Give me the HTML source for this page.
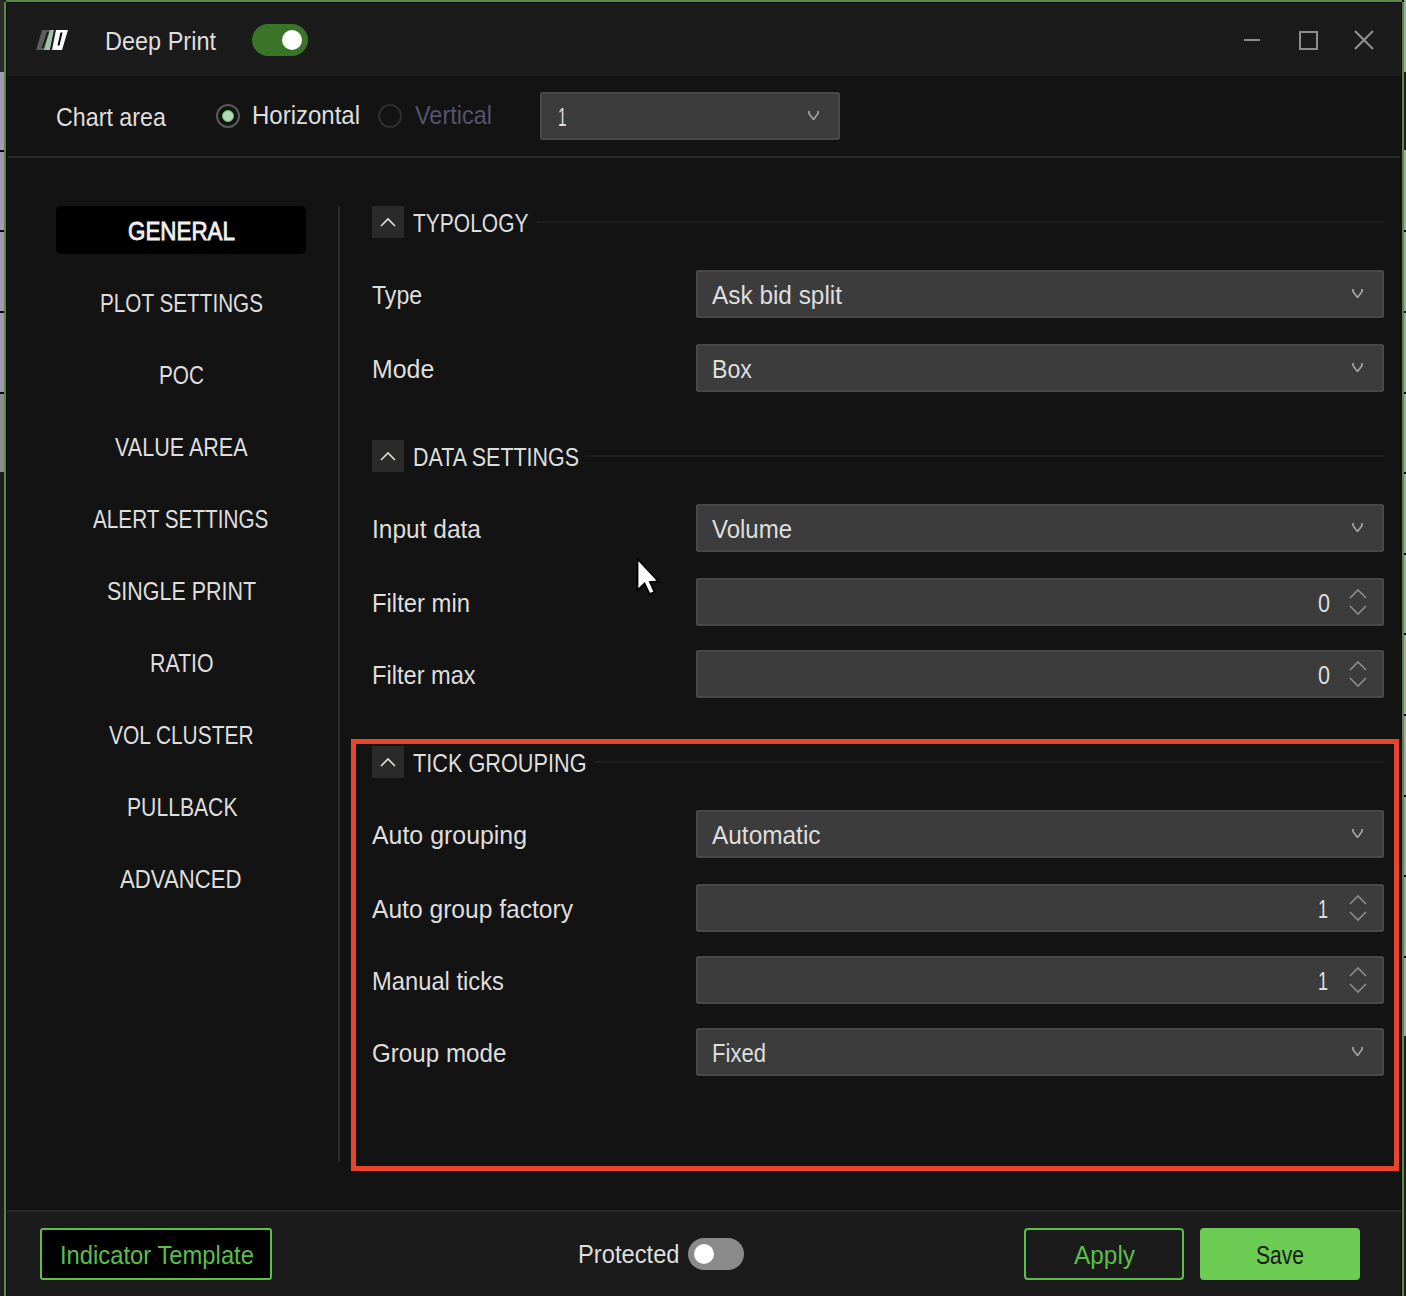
<!DOCTYPE html>
<html><head><meta charset="utf-8"><style>
html,body{margin:0;padding:0;width:1406px;height:1296px;overflow:hidden;background:#121212}
body{position:relative;font-family:"Liberation Sans",sans-serif}
.abs{position:absolute}
.t{position:absolute;font-size:25px;line-height:25px;white-space:nowrap;transform-origin:0 0}
.ic{position:absolute;overflow:visible}
.dd{position:absolute;box-sizing:border-box;background:#3c3c3c;border:2px solid #484848;border-radius:2px}
.hb{position:absolute;width:32px;height:32px;background:#2a2a2a}
.hl{position:absolute;height:2px;background:#1f1f1f}
</style></head><body>
<div class="abs" style="left:0;top:0;width:4px;height:72px;background:#2a2a2a"></div>
<div class="abs" style="left:0;top:72px;width:4px;height:320px;background:#a39ab3"></div>
<div class="abs" style="left:0;top:392px;width:4px;height:80px;background:#8e8e8e"></div>
<div class="abs" style="left:0;top:472px;width:4px;height:824px;background:#1e1e1e"></div>
<div class="abs" style="left:0;top:150px;width:4px;height:2px;background:#050505"></div>
<div class="abs" style="left:0;top:230px;width:4px;height:2px;background:#050505"></div>
<div class="abs" style="left:0;top:311px;width:4px;height:2px;background:#050505"></div>
<div class="abs" style="left:0;top:392px;width:4px;height:2px;background:#050505"></div>
<div class="abs" style="left:1404px;top:0px;width:2px;height:72px;background:#9aab98"></div>
<div class="abs" style="left:1404px;top:72px;width:2px;height:78px;background:#1e1e1e"></div>
<div class="abs" style="left:1404px;top:150px;width:2px;height:483px;background:#9aab98"></div>
<div class="abs" style="left:1404px;top:633px;width:2px;height:81px;background:#a2aea0"></div>
<div class="abs" style="left:1404px;top:714px;width:2px;height:81px;background:#a6a6a6"></div>
<div class="abs" style="left:1404px;top:795px;width:2px;height:161px;background:#9aab98"></div>
<div class="abs" style="left:1404px;top:956px;width:2px;height:80px;background:#a6a6a6"></div>
<div class="abs" style="left:1404px;top:1036px;width:2px;height:260px;background:#1e1e1e"></div>
<div class="abs" style="left:1404px;top:230px;width:2px;height:2px;background:#050505"></div>
<div class="abs" style="left:1404px;top:311px;width:2px;height:2px;background:#050505"></div>
<div class="abs" style="left:1404px;top:392px;width:2px;height:2px;background:#050505"></div>
<div class="abs" style="left:1404px;top:472px;width:2px;height:2px;background:#050505"></div>
<div class="abs" style="left:1404px;top:553px;width:2px;height:2px;background:#050505"></div>
<div class="abs" style="left:1404px;top:633px;width:2px;height:2px;background:#050505"></div>
<div class="abs" style="left:1404px;top:714px;width:2px;height:2px;background:#050505"></div>
<div class="abs" style="left:1404px;top:795px;width:2px;height:2px;background:#050505"></div>
<div class="abs" style="left:1404px;top:875px;width:2px;height:2px;background:#050505"></div>
<div class="abs" style="left:1404px;top:956px;width:2px;height:2px;background:#050505"></div>
<!-- window -->
<div class="abs" style="left:4px;top:0;width:2px;height:2px;background:#1e1e1e"></div>
<div class="abs" style="left:6px;top:0;width:1396px;height:2px;background:#5a8a48"></div>
<div class="abs" style="left:4px;top:2px;width:2px;height:1294px;background:#5a8a48"></div>
<div class="abs" style="left:1402px;top:2px;width:2px;height:1294px;background:#5a8a48"></div>
<div class="abs" style="left:6px;top:2px;width:1396px;height:1294px;background:#0e0e10"></div>
<div class="abs" style="left:7px;top:3px;width:1394px;height:73px;background:#1b1b1b"></div>
<div class="abs" style="left:7px;top:76px;width:1394px;height:1134px;background:#131313"></div>
<div class="abs" style="left:8px;top:156px;width:1392px;height:2px;background:#2a2a2a"></div>
<div class="abs" style="left:7px;top:1210px;width:1394px;height:2px;background:#272727"></div>
<div class="abs" style="left:7px;top:1212px;width:1394px;height:84px;background:#1b1b1b"></div>
<!-- logo -->
<svg class="ic" style="left:34px;top:28px" width="38" height="26" viewBox="34 28 38 26">
<polygon points="42,30 50,30 43.8,50 36,50" fill="#5c5c5c"/>
<polygon points="47,32 48.8,32 43.6,48 41.8,48" fill="#151515"/>
<polygon points="50,30 54,30 50,50 43.8,50" fill="#a3c2a3"/>
<polygon points="54,30 56,30 52,50 50,50" fill="#222"/>
<polygon points="56,30 68,30 62,50 52,50" fill="#ffffff"/>
<polygon points="60.5,32.5 62.5,32.5 59.5,45.5 57.5,45.5" fill="#000"/>
</svg>
<!-- title toggle -->
<div class="abs" style="left:252px;top:24px;width:56px;height:32px;border-radius:16px;background:#3a7428"></div>
<div class="abs" style="left:282px;top:30px;width:20px;height:20px;border-radius:10px;background:#fff"></div>
<!-- window buttons -->
<div class="abs" style="left:1244px;top:39px;width:16px;height:2px;background:#8e8e8e"></div>
<div class="abs" style="left:1299px;top:31px;width:19px;height:19px;box-sizing:border-box;border:2.5px solid #8e8e8e"></div>
<svg class="ic" style="left:1354px;top:30px" width="20" height="20" viewBox="0 0 20 20"><path d="M1 1 L19 19 M19 1 L1 19" stroke="#8e8e8e" stroke-width="2.2"/></svg>
<!-- radios -->
<div class="abs" style="left:216px;top:104px;width:24px;height:24px;box-sizing:border-box;border-radius:12px;border:2px solid #5a5a5a"></div>
<div class="abs" style="left:222px;top:110px;width:12px;height:12px;box-sizing:border-box;border-radius:6px;background:#b5d6bd;border:1.5px solid #5ccc4a"></div>
<div class="abs" style="left:378px;top:104px;width:24px;height:24px;box-sizing:border-box;border-radius:12px;border:2px solid #2e2e2e"></div>
<!-- chart area dropdown -->
<div class="dd" style="left:540px;top:92px;width:300px;height:48px"></div><svg class="ic" style="left:807px;top:110px" width="14" height="12" viewBox="0 0 14 12"><path d="M2 1 L2 3.5 L6.5 9.5 L11 3.5 L11 1" stroke="#a0a0a0" stroke-width="1.8" fill="none" stroke-linejoin="bevel"/></svg>
<!-- sidebar -->
<div class="abs" style="left:56px;top:206px;width:250px;height:48px;border-radius:5px;background:#000"></div>
<div class="abs" style="left:338px;top:206px;width:2px;height:956px;background:#2a2a2a"></div>
<!-- sections -->
<div class="hb" style="left:372px;top:206px"></div><svg class="ic" style="left:372px;top:206px" width="32" height="32" viewBox="0 0 32 32"><path d="M9 20 L16 13 L23 20" stroke="#dcdcd4" stroke-width="1.7" fill="none"/></svg><div class="hl" style="left:537px;top:221px;width:847px"></div>
<div class="dd" style="left:696px;top:270px;width:688px;height:48px"></div><svg class="ic" style="left:1351px;top:288px" width="14" height="12" viewBox="0 0 14 12"><path d="M2 1 L2 3.5 L6.5 9.5 L11 3.5 L11 1" stroke="#a0a0a0" stroke-width="1.8" fill="none" stroke-linejoin="bevel"/></svg>
<div class="dd" style="left:696px;top:344px;width:688px;height:48px"></div><svg class="ic" style="left:1351px;top:362px" width="14" height="12" viewBox="0 0 14 12"><path d="M2 1 L2 3.5 L6.5 9.5 L11 3.5 L11 1" stroke="#a0a0a0" stroke-width="1.8" fill="none" stroke-linejoin="bevel"/></svg>
<div class="hb" style="left:372px;top:440px"></div><svg class="ic" style="left:372px;top:440px" width="32" height="32" viewBox="0 0 32 32"><path d="M9 20 L16 13 L23 20" stroke="#dcdcd4" stroke-width="1.7" fill="none"/></svg><div class="hl" style="left:587px;top:455px;width:797px"></div>
<div class="dd" style="left:696px;top:504px;width:688px;height:48px"></div><svg class="ic" style="left:1351px;top:522px" width="14" height="12" viewBox="0 0 14 12"><path d="M2 1 L2 3.5 L6.5 9.5 L11 3.5 L11 1" stroke="#a0a0a0" stroke-width="1.8" fill="none" stroke-linejoin="bevel"/></svg>
<div class="dd" style="left:696px;top:578px;width:688px;height:48px"></div><svg class="ic" style="left:1348px;top:588px" width="20" height="28" viewBox="0 0 20 28"><path d="M2 10 L10 2 L18 10 M2 18 L10 26 L18 18" stroke="#8a8a8a" stroke-width="1.7" fill="none"/></svg>
<div class="dd" style="left:696px;top:650px;width:688px;height:48px"></div><svg class="ic" style="left:1348px;top:660px" width="20" height="28" viewBox="0 0 20 28"><path d="M2 10 L10 2 L18 10 M2 18 L10 26 L18 18" stroke="#8a8a8a" stroke-width="1.7" fill="none"/></svg>
<div class="hb" style="left:372px;top:746px"></div><svg class="ic" style="left:372px;top:746px" width="32" height="32" viewBox="0 0 32 32"><path d="M9 20 L16 13 L23 20" stroke="#dcdcd4" stroke-width="1.7" fill="none"/></svg><div class="hl" style="left:594px;top:761px;width:790px"></div>
<div class="dd" style="left:696px;top:810px;width:688px;height:48px"></div><svg class="ic" style="left:1351px;top:828px" width="14" height="12" viewBox="0 0 14 12"><path d="M2 1 L2 3.5 L6.5 9.5 L11 3.5 L11 1" stroke="#a0a0a0" stroke-width="1.8" fill="none" stroke-linejoin="bevel"/></svg>
<div class="dd" style="left:696px;top:884px;width:688px;height:48px"></div><svg class="ic" style="left:1348px;top:894px" width="20" height="28" viewBox="0 0 20 28"><path d="M2 10 L10 2 L18 10 M2 18 L10 26 L18 18" stroke="#8a8a8a" stroke-width="1.7" fill="none"/></svg>
<div class="dd" style="left:696px;top:956px;width:688px;height:48px"></div><svg class="ic" style="left:1348px;top:966px" width="20" height="28" viewBox="0 0 20 28"><path d="M2 10 L10 2 L18 10 M2 18 L10 26 L18 18" stroke="#8a8a8a" stroke-width="1.7" fill="none"/></svg>
<div class="dd" style="left:696px;top:1028px;width:688px;height:48px"></div><svg class="ic" style="left:1351px;top:1046px" width="14" height="12" viewBox="0 0 14 12"><path d="M2 1 L2 3.5 L6.5 9.5 L11 3.5 L11 1" stroke="#a0a0a0" stroke-width="1.8" fill="none" stroke-linejoin="bevel"/></svg>
<!-- red box -->
<div class="abs" style="left:351px;top:739px;width:1048px;height:432px;box-sizing:border-box;border:5px solid #e8452b"></div>
<!-- cursor -->
<svg class="ic" style="left:636px;top:557px" width="24" height="38" viewBox="0 0 24 38"><path d="M1.5 2 L1.5 33.5 L8.5 26.5 L13.5 37 L18.5 35 L14 25 L22.5 24.5 Z" fill="#fff" stroke="#000" stroke-width="1.8" stroke-linejoin="miter"/></svg>
<!-- footer -->
<div class="abs" style="left:40px;top:1228px;width:232px;height:52px;box-sizing:border-box;border:2px solid #5cbf48;border-radius:3px;background:#000"></div>
<div class="abs" style="left:688px;top:1238px;width:56px;height:32px;border-radius:16px;background:#8a8a8a"></div>
<div class="abs" style="left:694px;top:1244px;width:20px;height:20px;border-radius:10px;background:#fff"></div>
<div class="abs" style="left:1024px;top:1228px;width:160px;height:52px;box-sizing:border-box;border:2px solid #5cbf48;border-radius:4px"></div>
<div class="abs" style="left:1200px;top:1228px;width:160px;height:52px;border-radius:4px;background:#6bcb52"></div>
<div class="t" style="left:105.00px;top:28.83px;color:#dedede;transform:scaleX(0.9397)">Deep Print</div>
<div class="t" style="left:56.00px;top:104.83px;color:#dedede;transform:scaleX(0.9302)">Chart area</div>
<div class="t" style="left:252.00px;top:102.83px;color:#dedede;transform:scaleX(0.9600)">Horizontal</div>
<div class="t" style="left:415.00px;top:102.83px;color:#56536a;transform:scaleX(0.9390)">Vertical</div>
<div class="t" style="left:558.00px;top:104.83px;color:#dedede;transform:scaleX(0.6126)">1</div>
<div class="t" style="left:128.00px;top:218.83px;color:#f0f0f0;-webkit-text-stroke:0.8px #f0f0f0;transform:scaleX(0.8954)">GENERAL</div>
<div class="t" style="left:100.00px;top:290.83px;color:#dedede;transform:scaleX(0.8285)">PLOT SETTINGS</div>
<div class="t" style="left:159.00px;top:362.83px;color:#dedede;transform:scaleX(0.8314)">POC</div>
<div class="t" style="left:114.70px;top:434.83px;color:#dedede;transform:scaleX(0.8624)">VALUE AREA</div>
<div class="t" style="left:93.00px;top:506.83px;color:#dedede;transform:scaleX(0.8284)">ALERT SETTINGS</div>
<div class="t" style="left:107.00px;top:578.83px;color:#dedede;transform:scaleX(0.8582)">SINGLE PRINT</div>
<div class="t" style="left:149.80px;top:650.83px;color:#dedede;transform:scaleX(0.8537)">RATIO</div>
<div class="t" style="left:109.00px;top:722.83px;color:#dedede;transform:scaleX(0.8365)">VOL CLUSTER</div>
<div class="t" style="left:127.00px;top:794.83px;color:#dedede;transform:scaleX(0.8459)">PULLBACK</div>
<div class="t" style="left:120.00px;top:866.83px;color:#dedede;transform:scaleX(0.8861)">ADVANCED</div>
<div class="t" style="left:412.50px;top:210.83px;color:#dedede;transform:scaleX(0.8400)">TYPOLOGY</div>
<div class="t" style="left:413.00px;top:444.83px;color:#dedede;transform:scaleX(0.8579)">DATA SETTINGS</div>
<div class="t" style="left:412.50px;top:750.83px;color:#dedede;transform:scaleX(0.8675)">TICK GROUPING</div>
<div class="t" style="left:372.00px;top:282.83px;color:#dedede;transform:scaleX(0.9253)">Type</div>
<div class="t" style="left:372.00px;top:356.83px;color:#dedede;transform:scaleX(0.9952)">Mode</div>
<div class="t" style="left:372.00px;top:516.83px;color:#dedede;transform:scaleX(0.9798)">Input data</div>
<div class="t" style="left:372.00px;top:590.83px;color:#dedede;transform:scaleX(0.9538)">Filter min</div>
<div class="t" style="left:372.00px;top:662.83px;color:#dedede;transform:scaleX(0.9449)">Filter max</div>
<div class="t" style="left:372.00px;top:823.33px;color:#dedede;transform:scaleX(0.9960)">Auto grouping</div>
<div class="t" style="left:372.00px;top:896.83px;color:#dedede;transform:scaleX(0.9841)">Auto group factory</div>
<div class="t" style="left:372.00px;top:968.83px;color:#dedede;transform:scaleX(0.9496)">Manual ticks</div>
<div class="t" style="left:372.00px;top:1040.83px;color:#dedede;transform:scaleX(0.9676)">Group mode</div>
<div class="t" style="left:712.00px;top:282.83px;color:#dedede;transform:scaleX(0.9747)">Ask bid split</div>
<div class="t" style="left:712.00px;top:356.83px;color:#dedede;transform:scaleX(0.9275)">Box</div>
<div class="t" style="left:712.00px;top:516.83px;color:#dedede;transform:scaleX(0.9595)">Volume</div>
<div class="t" style="left:1318.00px;top:590.83px;color:#dedede;transform:scaleX(0.8649)">0</div>
<div class="t" style="left:1318.00px;top:662.83px;color:#dedede;transform:scaleX(0.8649)">0</div>
<div class="t" style="left:712.00px;top:823.33px;color:#dedede;transform:scaleX(0.9764)">Automatic</div>
<div class="t" style="left:1318.00px;top:896.83px;color:#dedede;transform:scaleX(0.7207)">1</div>
<div class="t" style="left:1318.00px;top:968.83px;color:#dedede;transform:scaleX(0.7207)">1</div>
<div class="t" style="left:712.00px;top:1040.83px;color:#dedede;transform:scaleX(0.8834)">Fixed</div>
<div class="t" style="left:60.00px;top:1242.83px;color:#5abf47;transform:scaleX(0.9516)">Indicator Template</div>
<div class="t" style="left:578.00px;top:1242.33px;color:#dedede;transform:scaleX(0.9486)">Protected</div>
<div class="t" style="left:1074.00px;top:1242.83px;color:#5abf47;transform:scaleX(0.9760)">Apply</div>
<div class="t" style="left:1256.00px;top:1242.83px;color:#1a1a1a;transform:scaleX(0.8421)">Save</div>
</body></html>
